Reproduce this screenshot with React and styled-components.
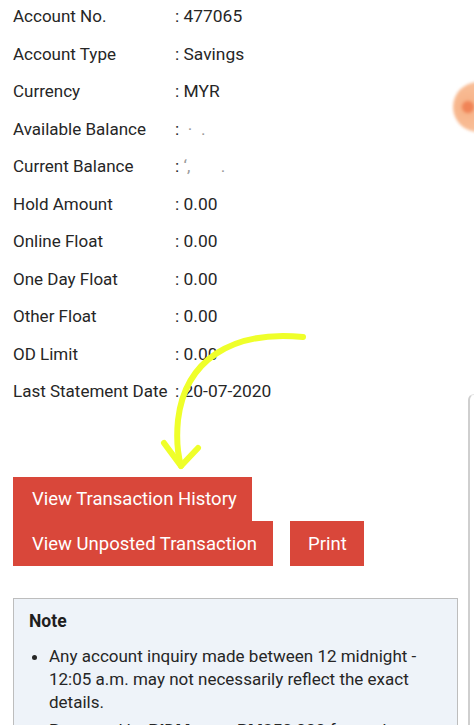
import styled, { createGlobalStyle } from "styled-components";

const GlobalStyle = createGlobalStyle`
  html, body {
    margin: 0;
    padding: 0;
    background: #ffffff;
  }
  body {
    font-family: Roboto, "Liberation Sans", Arial, sans-serif;
    color: #262626;
  }
`;

const Page = styled.div`
  position: relative;
  width: 474px;
  height: 725px;
  overflow: hidden;
  background: #fff;
`;

const Content = styled.div`
  padding: 4px 0 0 13px;
  width: 448px;
`;

const Details = styled.div`
  display: flex;
  flex-direction: column;
  gap: 13.5px;
`;

const Row = styled.div`
  display: flex;
  font-size: 17px;
  line-height: 24px;
  height: 24px;
`;

const Label = styled.div`
  width: 162px;
  white-space: nowrap;
`;

const Value = styled.div`
  white-space: nowrap;
  font-size: 17.4px;
`;

const Blur = styled.span`
  color: #9a9a9a;
  white-space: pre;
`;

const Actions = styled.div`
  margin-top: 74px;
  display: flex;
  flex-direction: column;
`;

const ActionRow = styled.div`
  display: flex;
  gap: 17px;
`;

const Button = styled.button`
  border: none;
  background: #d9473a;
  color: #fff;
  font-family: Roboto, "Liberation Sans", Arial, sans-serif;
  font-size: 18.5px;
  height: ${(p) => p.$h || 44}px;
  width: ${(p) => p.$w}px;
  padding: 0 0 0 ${(p) => p.$pl || 19}px;
  text-align: left;
  cursor: pointer;
`;

const NoteBox = styled.div`
  margin-top: 32px;
  width: 445px;
  border: 1px solid #bdbdbd;
  background: #eef3f9;
  padding: 10px 15px 20px 15px;
  box-sizing: border-box;
  height: 200px;
`;

const NoteTitle = styled.div`
  font-weight: 700;
  font-size: 17.5px;
  line-height: 24px;
  color: #1e1e1e;
`;

const NoteList = styled.ul`
  margin: 12px 0 0 0;
  padding-left: 20px;
  font-size: 17px;
  line-height: 23px;
  color: #262626;

  li + li {
    margin-top: 5px;
  }
`;

const EdgeBar = styled.div`
  position: absolute;
  left: 468px;
  top: 394px;
  width: 12px;
  height: 340px;
  border-left: 2px solid #cfcfcf;
  border-top: 1px solid #e4e4e4;
  border-top-left-radius: 6px;
`;

const OrangeDot = styled.div`
  position: absolute;
  left: 453px;
  top: 82px;
  width: 50px;
  height: 50px;
  border-radius: 50%;
  background: radial-gradient(circle at 30% 50%, #f08457 0, #f08457 5px, #f7b48a 7px, #f9c29d 70%, #fbd3b7 100%);
  filter: blur(1.5px);
`;

const Arrow = styled.svg`
  position: absolute;
  left: 0;
  top: 0;
  pointer-events: none;
`;

const rows = [
  ["Account No.", ": 477065"],
  ["Account Type", ": Savings"],
  ["Currency", ": MYR"],
  ["Available Balance", ":", "  ·  ."],
  ["Current Balance", ":", " ‘,       ."],
  ["Hold Amount", ": 0.00"],
  ["Online Float", ": 0.00"],
  ["One Day Float", ": 0.00"],
  ["Other Float", ": 0.00"],
  ["OD Limit", ": 0.00"],
  ["Last Statement Date", ": 20-07-2020"],
];

export default function App() {
  return (
    <>
      <GlobalStyle />
      <Page>
        <Content>
          <Details>
            {rows.map(([label, value, faint]) => (
              <Row key={label}>
                <Label>{label}</Label>
                <Value>
                  {value}
                  {faint && <Blur>{faint}</Blur>}
                </Value>
              </Row>
            ))}
          </Details>

          <Actions>
            <ActionRow>
              <Button $w={239} $h={44}>View Transaction History</Button>
            </ActionRow>
            <ActionRow>
              <Button $w={260} $h={45}>View Unposted Transaction</Button>
              <Button $w={74} $h={45} $pl={18}>Print</Button>
            </ActionRow>
          </Actions>

          <NoteBox>
            <NoteTitle>Note</NoteTitle>
            <NoteList>
              <li>
                Any account inquiry made between 12 midnight - 12:05 a.m. may
                not necessarily reflect the exact details.
              </li>
              <li>
                Protected by <b>PIDM</b> up to <b>RM250,000</b> for each
                depositor.
              </li>
            </NoteList>
          </NoteBox>
        </Content>

        <OrangeDot />
        <EdgeBar />

        <Arrow width="474" height="725" viewBox="0 0 474 725">
          <g
            fill="none"
            stroke="#efff2a"
            strokeWidth="6"
            strokeLinecap="round"
            strokeLinejoin="round"
          >
            <path d="M303 337 C 232 330, 185 360, 178 420 C 176 440, 178 455, 181 466" />
            <path d="M164 443 L 181 466 L 198 448" />
          </g>
        </Arrow>
      </Page>
    </>
  );
}
